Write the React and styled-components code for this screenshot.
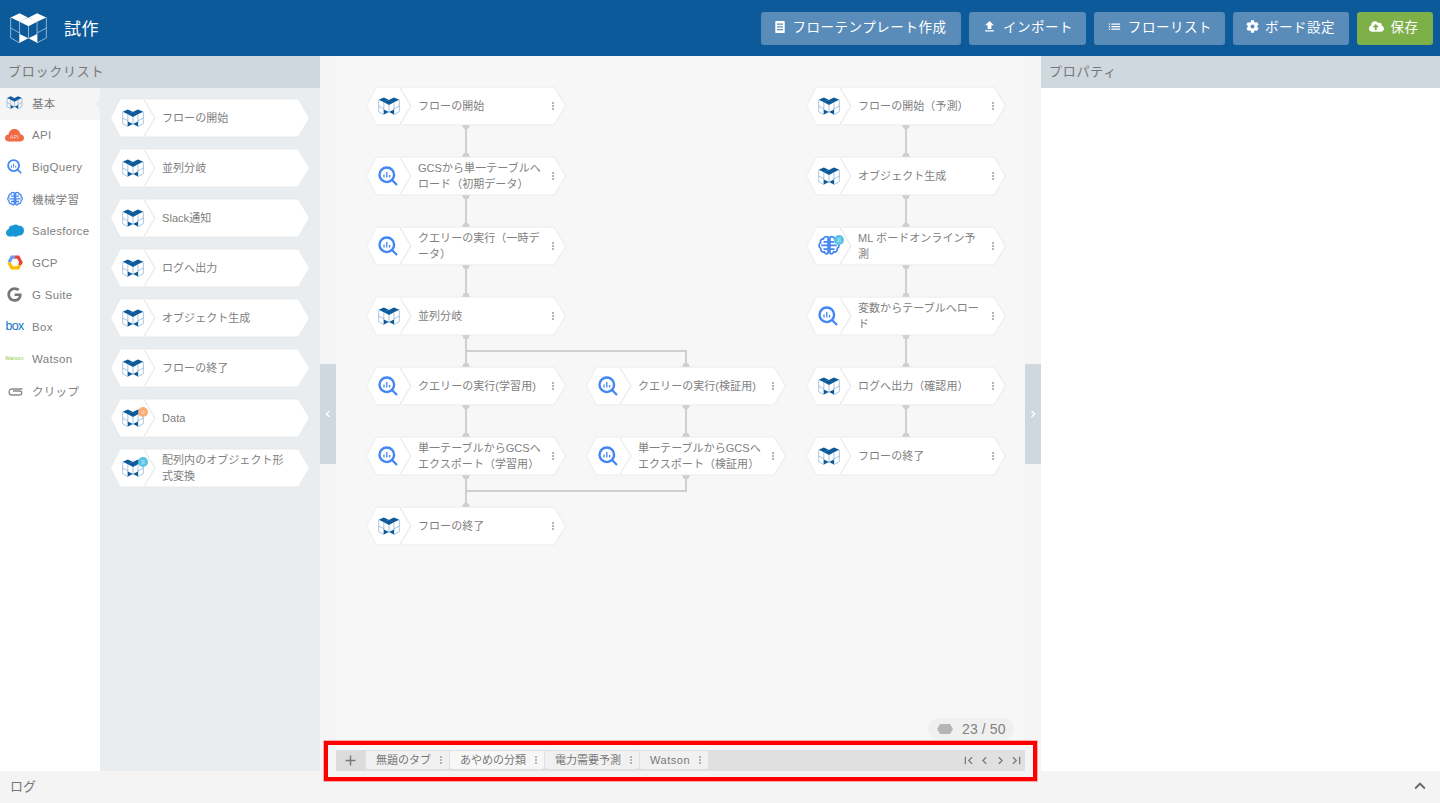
import React from 'react';
import styled, { createGlobalStyle } from 'styled-components';
import { FaCog, FaCloudUploadAlt, FaGoogle } from 'react-icons/fa';
import { MdFileUpload, MdList, MdKeyboardArrowUp, MdAdd, MdChevronLeft, MdChevronRight, MdFirstPage, MdLastPage } from 'react-icons/md';

const Global = createGlobalStyle`
  * { box-sizing: border-box; }
  html, body { margin: 0; padding: 0; height: 100%; overflow: hidden; }
  body { font-family: "Liberation Sans", "Noto Sans CJK JP", sans-serif; color: #777; }
`;

const Page = styled.div`display:flex;flex-direction:column;height:803px;width:1440px;`;
const Header = styled.header`height:56px;background:#0d5a9a;display:flex;align-items:center;padding:0 7px 0 10px;flex:none;`;
const Title = styled.h1`margin:0 0 2px 17px;font-size:17px;font-weight:400;color:#fff;letter-spacing:.5px;flex:1;`;
const HeaderActions = styled.div`display:flex;gap:8px;`;
const ActionButton = styled.button`
  height:33px;width:${p => p.$w}px;border:0;border-radius:3px;padding:0 ${p => p.$nudge || 0}px 5px 0;
  background:${p => (p.$save ? '#7eb04a' : '#5a8cba')};color:#fff;font:inherit;font-size:13.5px;letter-spacing:.55px;
  display:flex;align-items:center;justify-content:center;gap:${p => p.$gap || 6}px;
  svg{flex:none;margin-top:2px;}
`;
const Main = styled.div`flex:1;display:flex;min-height:0;`;
const Left = styled.aside`width:320px;display:flex;flex-direction:column;background:#fff;`;
const PanelHeading = styled.div`height:32px;flex:none;background:#cfd8de;color:#777;font-size:13px;letter-spacing:.75px;line-height:31px;padding-left:8px;`;
const LeftBody = styled.div`flex:1;display:flex;min-height:0;`;
const Categories = styled.nav`width:100px;flex:none;background:#fff;`;
const Category = styled.div`
  height:32px;position:relative;display:flex;align-items:center;padding-bottom:3px;background:${p => (p.$active ? '#f5f5f5' : '#fff')};
  font-size:11.5px;letter-spacing:.3px;color:#808080;
  ${p => p.$active && `&::after{content:"";position:absolute;right:0;top:11px;border:5px solid transparent;border-right-color:#e9edf0;border-left:0;}`}
`;
const CatIcon = styled.span`width:32px;flex:none;display:flex;justify-content:center;align-items:center;padding-right:3px;height:16px;`;
const Blocks = styled.div`flex:1;background:#e9edf0;padding:11px 11px 0 11px;display:flex;flex-direction:column;gap:12px;`;

const NodeBox = styled.div`
  width:198px;height:38px;flex:none;
  ${p => (p.$x !== undefined ? `position:absolute;left:${p.$x}px;top:${p.$y}px;` : 'position:relative;')}
`;
const NodeShape = styled.svg`position:absolute;left:0;top:0;overflow:visible;`;
const NodeIcon = styled.span`position:absolute;left:11px;top:${p => p.$top}px;display:block;line-height:0;`;
const NodeLabel = styled.div`
  position:absolute;left:51px;top:0;height:38px;display:flex;align-items:center;white-space:nowrap;
  font-size:11px;line-height:16px;letter-spacing:.05px;color:#808080;
`;
const Kebab = styled.span`
  position:absolute;left:184.5px;top:15px;width:2px;height:8px;
  background:radial-gradient(circle at 1px 1px,#b4b4b4 1px,transparent 1.1px) 0 0/2px 3px repeat-y;
`;
const Badge = styled.span`
  position:absolute;left:27px;top:8px;width:10px;height:10px;border-radius:50%;
  background:${p => (p.$b === 'β' ? '#5bc4e5' : '#f9ae78')};color:#ffffffaa;font-size:6px;line-height:10px;text-align:center;
`;

const Canvas = styled.section`width:721px;position:relative;background:#f5f5f5;padding:0 16px;display:flex;flex-direction:column;`;
const Sheet = styled.div`flex:1;background:#f7f7f7;display:flex;flex-direction:column;min-height:0;`;
const Diagram = styled.div`flex:1;position:relative;`;
const Wires = styled.svg`position:absolute;left:0;top:0;`;
const Handle = styled.div`
  position:absolute;top:308px;${p => p.$side}:0;width:16px;height:100px;background:#cfd8de;color:#fff;
  display:flex;align-items:center;justify-content:center;
`;
const CounterRow = styled.div`display:flex;justify-content:flex-end;padding:0 11px 10px 0;`;
const Counter = styled.div`
  height:22px;width:86px;border-radius:11px;background:#f0f0f0;display:flex;align-items:center;gap:9px;padding-left:9px;
  font-size:14px;color:#808080;letter-spacing:.1px;
`;
const TabBar = styled.div`height:21px;flex:none;background:#e0e0e0;display:flex;position:relative;z-index:3;align-items:flex-start;`;
const Highlight = styled.div`
  position:absolute;left:-12px;right:-12px;top:-9px;bottom:-10px;border:4px solid #f00;box-shadow:0 0 0 .5px #ff5a5a;pointer-events:none;
`;
const AddTab = styled.div`width:29px;height:21px;background:#dcdcdc;color:#777;display:flex;align-items:center;justify-content:center;flex:none;margin-right:1px;`;
const Tab = styled.div`
  width:${p => p.$w}px;height:18px;margin:1px 1px 0 0;background:${p => (p.$active ? '#f7f7f7' : '#f1f1f1')};border-radius:0 0 3px 3px;flex:none;position:relative;
  font-size:11px;letter-spacing:${p => (p.$latin ? '.55px' : '0')};line-height:18px;padding-left:10px;color:#777;
`;
const TabDots = styled(Kebab)`left:auto;right:7px;top:5px;`;
const TabNav = styled.div`margin-left:auto;height:21px;display:flex;align-items:center;padding-right:1px;color:#777;gap:0;`;
const NavSlot = styled.span`width:16px;display:flex;justify-content:center;line-height:0;`;

const Right = styled.aside`width:399px;display:flex;flex-direction:column;background:#fff;`;
const LogBar = styled.footer`height:32px;flex:none;background:#f4f4f4;display:flex;align-items:center;justify-content:space-between;padding:0 9px 3px 10px;font-size:13px;color:#777;`;

const Logo = ({ w = 22, h = 18, fill = '#0d5a9a', line = '#6b9cc9', sw = 3 }) => (
  <svg width={w} height={h} viewBox="28 35 112 94">
    <g fill="none" stroke={line} strokeWidth={sw}>
      <path d="M30 50V112L57 127M138 50V112L110 127M30 82L57 97M138 82L110 97M57 63V127M110 63V127M84 77V113" />
    </g>
    <path fill={fill} d="M30 50L57 37L82 50L57 63ZM85 50L110 37L138 50L110 63ZM57 63L84 50L110 63L84 77ZM57 100L84 113L110 100V127L84 113L57 127Z" />
  </svg>
);
const BigQ = ({ s = 20 }) => (
  <svg width={s} height={s} viewBox="0 0 20 20">
    <circle cx="8.8" cy="8.8" r="7.3" fill="none" stroke="#4285f4" strokeWidth="2.4" />
    <path d="M13.8 13.8L19 19" stroke="#4285f4" strokeWidth="2.2" />
    <path d="M6 8.5v3M8.8 6v5.5M11.6 9v2.5" stroke="#4285f4" strokeWidth="1.3" />
  </svg>
);
const brainHalf = 'M11 2C8.500 .5 6 2 6 4C3.500 3.500 2 6 3 8C.5 9 .5 13 3 14C2.500 17 5 19 7 18C8 20.500 10.500 21 11 19ZM11 7H6M11 11H3.500M11 15H6';
const Brain = ({ w = 22, h = 20 }) => (
  <svg width={w} height={h} viewBox="0 0 24 21" fill="none" stroke="#4285f4" strokeWidth="1.900" strokeLinejoin="round">
    <path d={brainHalf} />
    <path d={brainHalf} transform="matrix(-1 0 0 1 24 0)" />
  </svg>
);
const ApiIcon = () => (
  <svg width="19" height="14" viewBox="0 0 19 14">
    <path fill="#f26b47" d="M4 13.500C1.500 13.500 0 12 0 10C0 8 1.500 6.500 3.500 6.500C4 3 6.500 1 9.500 1C12.500 1 15 3 15.500 6.500C17.500 6.500 19 8 19 10C19 12 17.500 13.500 15 13.500Z" />
    <text x="9.500" y="11" textAnchor="middle" fontSize="5" fill="#ffffffcc" fontFamily="Liberation Sans">API</text>
  </svg>
);
const SfIcon = () => (
  <svg width="18" height="13" viewBox="0 0 18 13">
    <path fill="#1798d5" d="M4 12.500C1.500 12.500 0 11 0 8.800C0 7 1 5.600 2.500 5.200C3 2.500 5 1 7 1.600C8.500.2 11 .2 12.500 1.800C15.500 1.500 18 3.500 18 6.500C18 9.800 15.500 12 12.500 11.500C10.500 13.300 8 13 7 12C6 12.700 5 12.700 4 12.500Z" />
  </svg>
);
const GcpIcon = () => (
  <svg width="16" height="15" viewBox="0 0 16 15" fill="none" strokeWidth="3.2">
    <path stroke="#6a9cf4" d="M2 7.500L4.800 2.200H8" />
    <path stroke="#ea4335" d="M8 2.200H11.200L14 7.500L12.500 10" />
    <path stroke="#fbbc05" d="M12.500 10L11.200 12.800H4.800L2 7.500" />
    <circle cx="8" cy="7.500" r="2.600" fill="#fff" stroke="#f4f4f4" strokeWidth="1" />
  </svg>
);
const BoxLogo = styled.span`font-size:12.5px;letter-spacing:-.8px;line-height:1;color:#0f74c8;`;
const WatsonLogo = styled.span`font-size:5px;line-height:1;color:#8cc63f;`;
const Clip = () => (
  <svg width="16" height="10" viewBox="0 0 16 10" fill="none" stroke="#8a8a8a" strokeWidth="1.300">
    <path d="M15.500 3H5C1 3 1 9 5 9H12.500C15.500 9 15.500 5 12.500 5H6" />
  </svg>
);
const Chevron = ({ dir }) => (
  <svg width="6" height="10" viewBox="0 0 6 10" fill="none" stroke="#fff" strokeWidth="1.3">
    <path d={dir === 'l' ? 'M4.500 2L1.500 5L4.500 8' : 'M1.500 2L4.500 5L1.500 8'} />
  </svg>
);
const ListAlt = () => (
  <svg width="10" height="12" viewBox="0 0 11 14">
    <path fill="#fff" fillRule="evenodd" d="M1 0H10a1 1 0 0 1 1 1V13a1 1 0 0 1-1 1H1a1 1 0 0 1-1-1V1a1 1 0 0 1 1-1ZM2 3V4.500H9V3ZM2 6.200V7.700H9V6.200ZM2 9.400V10.900H9V9.400Z" />
  </svg>
);
const MiniHex = () => (
  <svg width="16" height="10" viewBox="0 0 16 10"><path fill="#b5b5b5" d="M3 0H13L16 5L13 10H3L0 5Z" /></svg>
);

const HexShape = () => (
  <NodeShape width="198" height="38" viewBox="0 0 198 38">
    <path d="M0 19L9.500 .5H187L198 19L187 37.500H9.500Z" fill="#fff" stroke="#e8e8e8" strokeWidth="1.500" strokeLinejoin="round" paintOrder="stroke" />
    <path d="M33 .7L44 19L33 37.300" fill="none" stroke="#e8e8e8" strokeWidth="1.100" />
  </NodeShape>
);

const Node = ({ kind = 'logo', label, x, y, badge, dots }) => (
  <NodeBox $x={x} $y={y}>
    <HexShape />
    <NodeIcon $top={kind === 'logo' ? 10 : kind === 'bq' ? 9 : 8}>
      {kind === 'logo' && <Logo />}
      {kind === 'bq' && <BigQ />}
      {kind === 'brain' && <Brain />}
    </NodeIcon>
    {badge && <Badge $b={badge}>{badge}</Badge>}
    <NodeLabel><span>{label}</span></NodeLabel>
    {dots && <Kebab />}
  </NodeBox>
);

const cats = [
  ['基本', <Logo w={17} h={13} sw={4} />, true],
  ['API', <ApiIcon />],
  ['BigQuery', <BigQ s={15} />],
  ['機械学習', <Brain w={16} h={15} />],
  ['Salesforce', <SfIcon />],
  ['GCP', <GcpIcon />],
  ['G Suite', <FaGoogle size={15} color="#777" />],
  ['Box', <BoxLogo>box</BoxLogo>],
  ['Watson', <WatsonLogo>Watson</WatsonLogo>],
  ['クリップ', <Clip />],
];

const palette = [
  { label: 'フローの開始' }, { label: '並列分岐' }, { label: 'Slack通知' }, { label: 'ログへ出力' },
  { label: 'オブジェクト生成' }, { label: 'フローの終了' }, { label: 'Data', badge: 'α' },
  { label: <>配列内のオブジェクト形<br />式変換</>, badge: 'β' },
];

const flow = [
  { x: 31, y: 31, label: 'フローの開始' },
  { x: 31, y: 101, kind: 'bq', label: <>GCSから単一テーブルへ<br />ロード（初期データ）</> },
  { x: 31, y: 171, kind: 'bq', label: <>クエリーの実行（一時デ<br />ータ）</> },
  { x: 31, y: 241, label: '並列分岐' },
  { x: 31, y: 311, kind: 'bq', label: 'クエリーの実行(学習用)' },
  { x: 31, y: 381, kind: 'bq', label: <>単一テーブルからGCSへ<br />エクスポート（学習用）</> },
  { x: 31, y: 451, label: 'フローの終了' },
  { x: 251, y: 311, kind: 'bq', label: 'クエリーの実行(検証用)' },
  { x: 251, y: 381, kind: 'bq', label: <>単一テーブルからGCSへ<br />エクスポート（検証用）</> },
  { x: 471, y: 31, label: 'フローの開始（予測）' },
  { x: 471, y: 101, label: 'オブジェクト生成' },
  { x: 471, y: 171, kind: 'brain', badge: 'β', label: <>ML ボードオンライン予<br />測</> },
  { x: 471, y: 241, kind: 'bq', label: <>変数からテーブルへロー<br />ド</> },
  { x: 471, y: 311, label: 'ログへ出力（確認用）' },
  { x: 471, y: 381, label: 'フローの終了' },
];

const links = [
  [130, 69], [130, 139], [130, 209], [130, 349], [350, 349], [130, 419],
  [570, 69], [570, 139], [570, 209], [570, 279], [570, 349],
];
const capDown = (x, y) => `M${x - 4} ${y}H${x + 4}L${x + 2.5} ${y + 3.5}Q${x} ${y + 5} ${x - 2.5} ${y + 3.5}Z`;
const capUp = (x, y) => `M${x - 4} ${y}H${x + 4}L${x + 2.5} ${y - 3.5}Q${x} ${y - 5} ${x - 2.5} ${y - 3.5}Z`;

const WireLayer = () => (
  <Wires width="689" height="560" viewBox="0 0 689 560" fill="none">
    {links.map(([x, y]) => (
      <g key={`${x}-${y}`}>
        <path d={`M${x} ${y}V${y + 32}`} stroke="#cfcfcf" strokeWidth="2" />
        <path d={capDown(x, y)} fill="#cfcfcf" />
        <path d={capUp(x, y + 32)} fill="#cfcfcf" />
      </g>
    ))}
    <path d="M130 279V311M130 295H350V311" stroke="#cfcfcf" strokeWidth="2" />
    <path d={capDown(130, 279)} fill="#cfcfcf" />
    <path d={capUp(130, 311)} fill="#cfcfcf" />
    <path d={capUp(350, 311)} fill="#cfcfcf" />
    <path d="M130 419V451M130 435H350V419" stroke="#cfcfcf" strokeWidth="2" />
    <path d={capDown(350, 419)} fill="#cfcfcf" />
  </Wires>
);

export default function App() {
  return (
    <Page>
      <Global />
      <Header>
        <Logo w={37} h={32} fill="#fff" line="#cfe0ef" sw={2} />
        <Title>試作</Title>
        <HeaderActions>
          <ActionButton $w={200} $gap={7}><ListAlt />フローテンプレート作成</ActionButton>
          <ActionButton $w={117}><MdFileUpload size={15} />インポート</ActionButton>
          <ActionButton $w={131}><MdList size={15} />フローリスト</ActionButton>
          <ActionButton $w={116} $nudge={1}><FaCog size={13} />ボード設定</ActionButton>
          <ActionButton $w={76} $save $nudge={2}><FaCloudUploadAlt size={15} />保存</ActionButton>
        </HeaderActions>
      </Header>
      <Main>
        <Left>
          <PanelHeading>ブロックリスト</PanelHeading>
          <LeftBody>
            <Categories>
              {cats.map(([name, icon, active]) => (
                <Category key={name} $active={active}><CatIcon>{icon}</CatIcon>{name}</Category>
              ))}
            </Categories>
            <Blocks>
              {palette.map((n, i) => <Node key={i} {...n} />)}
            </Blocks>
          </LeftBody>
        </Left>
        <Canvas>
          <Handle $side="left"><Chevron dir="l" /></Handle>
          <Handle $side="right"><Chevron dir="r" /></Handle>
          <Sheet>
            <Diagram>
              <WireLayer />
              {flow.map((n, i) => <Node key={i} {...n} dots />)}
            </Diagram>
            <CounterRow>
              <Counter><MiniHex />23 / 50</Counter>
            </CounterRow>
            <TabBar>
              <AddTab><MdAdd size={17} /></AddTab>
              <Tab $w={83}>無題のタブ<TabDots /></Tab>
              <Tab $w={94} $active>あやめの分類<TabDots /></Tab>
              <Tab $w={94}>電力需要予測<TabDots /></Tab>
              <Tab $w={68} $latin>Watson<TabDots /></Tab>
              <TabNav>
                <NavSlot><MdFirstPage size={15} /></NavSlot>
                <NavSlot><MdChevronLeft size={15} /></NavSlot>
                <NavSlot><MdChevronRight size={15} /></NavSlot>
                <NavSlot><MdLastPage size={15} /></NavSlot>
              </TabNav>
              <Highlight />
            </TabBar>
          </Sheet>
        </Canvas>
        <Right>
          <PanelHeading>プロパティ</PanelHeading>
        </Right>
      </Main>
      <LogBar>ログ<MdKeyboardArrowUp size={22} color="#666" /></LogBar>
    </Page>
  );
}
